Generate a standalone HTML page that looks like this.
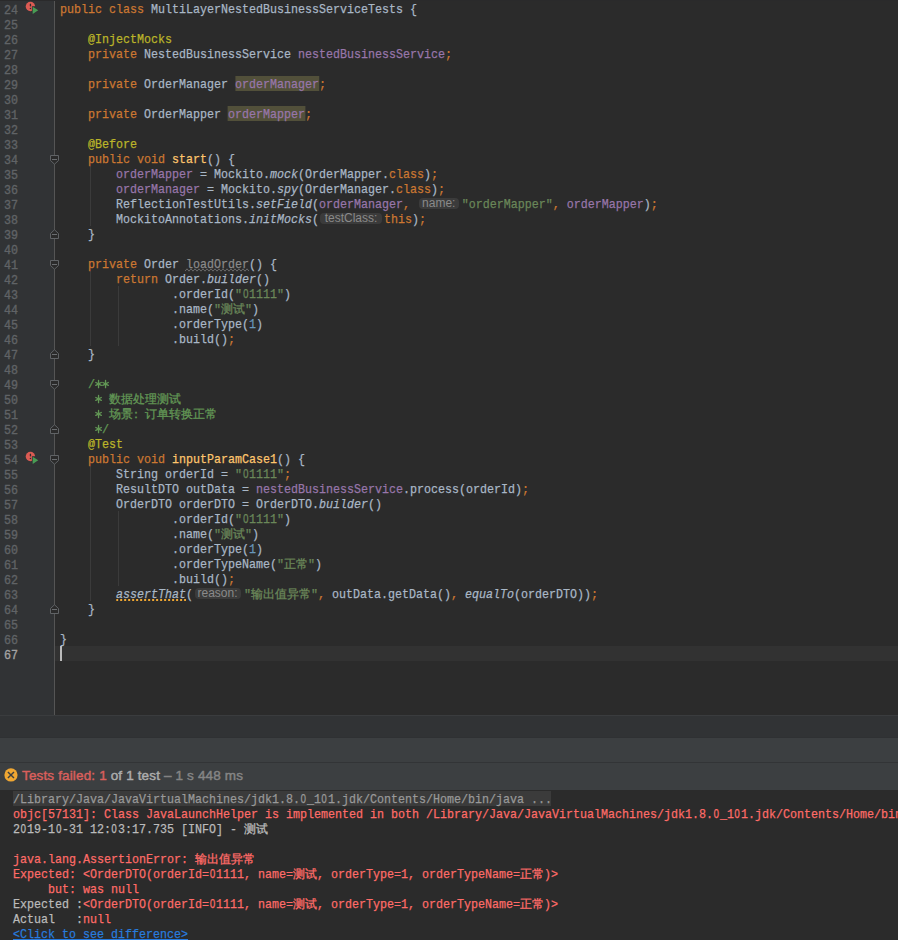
<!DOCTYPE html>
<html><head><meta charset="utf-8"><style>
*{margin:0;padding:0;box-sizing:border-box}
html,body{width:898px;height:940px;overflow:hidden;background:#2B2B2B}
body{position:relative;font-family:"Liberation Mono",monospace;font-size:13.5px;line-height:15px}
.gutter{position:absolute;left:0;top:0;width:54px;height:715px;background:#313335}
.sep{position:absolute;left:54px;top:0;width:1px;height:715px;background:#555555}
.curline{position:absolute;left:55px;top:646px;width:843px;height:15px;background:#323232}
.caret{position:absolute;left:60px;top:646px;width:2px;height:15px;background:#BBBBBB}
.l,.ln,.cl{position:absolute;height:15px;white-space:pre;transform:scaleX(0.86407);transform-origin:0 0;-webkit-text-stroke-width:0.25px}
.l{left:60px;color:#A9B7C6}
.ln{left:4px;color:#606366;font-size:12.6px;transform:scaleX(0.92579);-webkit-text-stroke-width:0.35px;padding-top:2px;height:17px}
.ln.cur{color:#A4A3A3}
.k{color:#CC7832}
.an{color:#BBB529}
.f{color:#9876AA}
.wf{color:#9876AA;background:#52503A;display:inline-block;height:15px;vertical-align:top;margin-top:-1px;padding-top:1px}
.s{color:#6A8759}
.n{color:#6897BB}
.c{color:#629755}
.m{color:#FFC66D}
.i{font-style:italic}
.iw{font-style:italic;background-image:linear-gradient(90deg,#F0A732 50%,transparent 50%);background-size:4.629px 2px;background-repeat:repeat-x;background-position:0 12px}
.u{color:#8A8A8A}
.cj{display:inline-block;white-space:nowrap;vertical-align:baseline;font-size:12px;transform:scaleX(1.15732);transform-origin:0 0;-webkit-text-stroke-width:0.3px}
.ast{position:absolute}
.z{display:inline-block;transform:scaleX(0.8)}
.sp{display:inline-block;height:1px}
.hint{position:absolute;height:11px;border-radius:4px;background:#3B3B3B;color:#8A8A8A;font-family:"Liberation Sans",sans-serif;font-size:12px;line-height:11px;text-align:center;white-space:pre}
.gi{position:absolute}
.fold{position:absolute}
.ig{position:absolute;width:1px;background:#3B3B3B}
.band1{position:absolute;left:0;top:715px;width:898px;height:23px;background:#313335;border-top:1px solid #3A3C3E}
.band2{position:absolute;left:0;top:737px;width:898px;height:25px;background:#3C3F41;border-top:1px solid #2F3133}
.band3{position:absolute;left:0;top:762px;width:898px;height:28px;background:#3C3F41;border-top:1px solid #323436}
.status{position:absolute;left:22px;top:763px;height:28px;line-height:26px;font-family:"Liberation Sans",sans-serif;font-size:13.5px;white-space:pre;letter-spacing:0.15px;-webkit-text-stroke-width:0.45px}
.status .r{color:#D95F5C}.status .g1{color:#ADADAD}.status .g2{color:#858585}
.console{position:absolute;left:0;top:790px;width:898px;height:150px;background:#2B2B2B}
.cl{left:13px;color:#BBBBBB}
.cmdbg{position:absolute;left:13px;height:15px;background:#3B3B3B}
.cl.cmd{color:#999999}
.err,.cl .err{color:#FF6B68}
.out{color:#BBBBBB}
.link{color:#287BDE;text-decoration:underline}
</style></head><body>
<div class="gutter"></div>
<div class="curline"></div>
<div class="sep"></div>
<div class="ln" style="top:2px">24</div>
<div class="ln" style="top:17px">25</div>
<div class="ln" style="top:32px">26</div>
<div class="ln" style="top:47px">27</div>
<div class="ln" style="top:62px">28</div>
<div class="ln" style="top:77px">29</div>
<div class="ln" style="top:92px">30</div>
<div class="ln" style="top:107px">31</div>
<div class="ln" style="top:122px">32</div>
<div class="ln" style="top:137px">33</div>
<div class="ln" style="top:152px">34</div>
<div class="ln" style="top:167px">35</div>
<div class="ln" style="top:182px">36</div>
<div class="ln" style="top:197px">37</div>
<div class="ln" style="top:212px">38</div>
<div class="ln" style="top:227px">39</div>
<div class="ln" style="top:242px">40</div>
<div class="ln" style="top:257px">41</div>
<div class="ln" style="top:272px">42</div>
<div class="ln" style="top:287px">43</div>
<div class="ln" style="top:302px">44</div>
<div class="ln" style="top:317px">45</div>
<div class="ln" style="top:332px">46</div>
<div class="ln" style="top:347px">47</div>
<div class="ln" style="top:362px">48</div>
<div class="ln" style="top:377px">49</div>
<div class="ln" style="top:392px">50</div>
<div class="ln" style="top:407px">51</div>
<div class="ln" style="top:422px">52</div>
<div class="ln" style="top:437px">53</div>
<div class="ln" style="top:452px">54</div>
<div class="ln" style="top:467px">55</div>
<div class="ln" style="top:482px">56</div>
<div class="ln" style="top:497px">57</div>
<div class="ln" style="top:512px">58</div>
<div class="ln" style="top:527px">59</div>
<div class="ln" style="top:542px">60</div>
<div class="ln" style="top:557px">61</div>
<div class="ln" style="top:572px">62</div>
<div class="ln" style="top:587px">63</div>
<div class="ln" style="top:602px">64</div>
<div class="ln" style="top:617px">65</div>
<div class="ln" style="top:632px">66</div>
<div class="ln cur" style="top:647px">67</div>
<div class="ig" style="left:118px;top:286px;height:60px"></div>
<div class="ig" style="left:118px;top:511px;height:75px"></div>
<div class="ig" style="left:90px;top:166px;height:60px"></div>
<div class="ig" style="left:90px;top:271px;height:75px"></div>
<div class="ig" style="left:90px;top:466px;height:135px"></div>
<svg class="fold" style="left:50px;top:150px" width="9" height="15" viewBox="0 0 9 15"><path d="M0.5 5.5 H8.5 V10.5 L4.5 14.2 L0.5 10.5 Z" fill="#2B2B2B" stroke="#606366" stroke-width="1"/><rect x="2" y="9" width="5" height="1" fill="#6A6D70"/></svg>
<svg class="fold" style="left:50px;top:225px" width="9" height="15" viewBox="0 0 9 15"><path d="M0.5 13.5 H8.5 V8.5 L4.5 4.8 L0.5 8.5 Z" fill="#2B2B2B" stroke="#606366" stroke-width="1"/><rect x="2" y="9" width="5" height="1" fill="#6A6D70"/></svg>
<svg class="fold" style="left:50px;top:255px" width="9" height="15" viewBox="0 0 9 15"><path d="M0.5 5.5 H8.5 V10.5 L4.5 14.2 L0.5 10.5 Z" fill="#2B2B2B" stroke="#606366" stroke-width="1"/><rect x="2" y="9" width="5" height="1" fill="#6A6D70"/></svg>
<svg class="fold" style="left:50px;top:345px" width="9" height="15" viewBox="0 0 9 15"><path d="M0.5 13.5 H8.5 V8.5 L4.5 4.8 L0.5 8.5 Z" fill="#2B2B2B" stroke="#606366" stroke-width="1"/><rect x="2" y="9" width="5" height="1" fill="#6A6D70"/></svg>
<svg class="fold" style="left:50px;top:375px" width="9" height="15" viewBox="0 0 9 15"><path d="M0.5 5.5 H8.5 V10.5 L4.5 14.2 L0.5 10.5 Z" fill="#2B2B2B" stroke="#606366" stroke-width="1"/><rect x="2" y="9" width="5" height="1" fill="#6A6D70"/></svg>
<svg class="fold" style="left:50px;top:420px" width="9" height="15" viewBox="0 0 9 15"><path d="M0.5 13.5 H8.5 V8.5 L4.5 4.8 L0.5 8.5 Z" fill="#2B2B2B" stroke="#606366" stroke-width="1"/><rect x="2" y="9" width="5" height="1" fill="#6A6D70"/></svg>
<svg class="fold" style="left:50px;top:450px" width="9" height="15" viewBox="0 0 9 15"><path d="M0.5 5.5 H8.5 V10.5 L4.5 14.2 L0.5 10.5 Z" fill="#2B2B2B" stroke="#606366" stroke-width="1"/><rect x="2" y="9" width="5" height="1" fill="#6A6D70"/></svg>
<svg class="fold" style="left:50px;top:600px" width="9" height="15" viewBox="0 0 9 15"><path d="M0.5 13.5 H8.5 V8.5 L4.5 4.8 L0.5 8.5 Z" fill="#2B2B2B" stroke="#606366" stroke-width="1"/><rect x="2" y="9" width="5" height="1" fill="#6A6D70"/></svg>
<svg class="gi" style="left:22px;top:1px" width="20" height="15" viewBox="0 0 20 15">
<circle cx="8.4" cy="5.5" r="4.7" fill="#DB5B53"/>
<ellipse cx="8.45" cy="3.9" rx="0.75" ry="1.5" fill="#2d2d2d"/>
<circle cx="8.45" cy="7.5" r="0.75" fill="#2d2d2d"/>
<rect x="9.9" y="5.2" width="8" height="9" fill="#313335"/>
<path d="M10.7 5.7 L16.2 9.3 L10.7 12.9 Z" fill="#499C54"/>
</svg><svg class="gi" style="left:22px;top:451px" width="20" height="15" viewBox="0 0 20 15">
<circle cx="8.4" cy="5.5" r="4.7" fill="#DB5B53"/>
<ellipse cx="8.45" cy="3.9" rx="0.75" ry="1.5" fill="#2d2d2d"/>
<circle cx="8.45" cy="7.5" r="0.75" fill="#2d2d2d"/>
<rect x="9.9" y="5.2" width="8" height="9" fill="#313335"/>
<path d="M10.7 5.7 L16.2 9.3 L10.7 12.9 Z" fill="#499C54"/>
</svg>
<div class="l" style="top:2px"><span class="k">public class</span> MultiLayerNestedBusinessServiceTests {</div>
<div class="l" style="top:17px"></div>
<div class="l" style="top:32px">    <span class="an">@InjectMocks</span></div>
<div class="l" style="top:47px">    <span class="k">private</span> NestedBusinessService <span class="f">nestedBusinessService</span><span class="k">;</span></div>
<div class="l" style="top:62px"></div>
<div class="l" style="top:77px">    <span class="k">private</span> OrderManager <span class="wf">orderManager</span><span class="k">;</span></div>
<div class="l" style="top:92px"></div>
<div class="l" style="top:107px">    <span class="k">private</span> OrderMapper <span class="wf">orderMapper</span><span class="k">;</span></div>
<div class="l" style="top:122px"></div>
<div class="l" style="top:137px">    <span class="an">@Before</span></div>
<div class="l" style="top:152px">    <span class="k">public void</span> <span class="m">start</span>() {</div>
<div class="l" style="top:167px">        <span class="f">orderMapper</span> = Mockito.<span class="i">mock</span>(OrderMapper.<span class="k">class</span>)<span class="k">;</span></div>
<div class="l" style="top:182px">        <span class="f">orderManager</span> = Mockito.<span class="i">spy</span>(OrderManager.<span class="k">class</span>)<span class="k">;</span></div>
<div class="l" style="top:197px">        ReflectionTestUtils.<span class="i">setField</span>(<span class="f">orderManager</span><span class="k">,</span> <span class="sp" style="width:51.616px"></span><span class="s">"orderMapper"</span><span class="k">,</span> <span class="f">orderMapper</span>)<span class="k">;</span></div>
<div class="l" style="top:212px">        MockitoAnnotations.<span class="i">initMocks</span>(<span class="sp" style="width:75.226px"></span><span class="k">this</span>)<span class="k">;</span></div>
<div class="l" style="top:227px">    }</div>
<div class="l" style="top:242px"></div>
<div class="l" style="top:257px">    <span class="k">private</span> Order <span class="u">loadOrder</span>() {</div>
<div class="l" style="top:272px">        <span class="k">return</span> Order.<span class="i">builder</span>()</div>
<div class="l" style="top:287px">                .orderId(<span class="s">"<span class="z">O</span>1111"</span>)</div>
<div class="l" style="top:302px">                .name(<span class="s">"<span class="cj" style="width:27.776px">测试</span>"</span>)</div>
<div class="l" style="top:317px">                .orderType(<span class="n">1</span>)</div>
<div class="l" style="top:332px">                .build()<span class="k">;</span></div>
<div class="l" style="top:347px">    }</div>
<div class="l" style="top:362px"></div>
<div class="l" style="top:377px">    <span class="c">/  </span></div>
<div class="l" style="top:392px">    <span class="c">   <span class="cj" style="width:83.327px">数据处理测试</span></span></div>
<div class="l" style="top:407px">    <span class="c">   <span class="cj" style="width:124.990px">场景<span style="position:relative;left:-3px">：</span>订单转换正常</span></span></div>
<div class="l" style="top:422px">    <span class="c">  /</span></div>
<div class="l" style="top:437px">    <span class="an">@Test</span></div>
<div class="l" style="top:452px">    <span class="k">public void</span> <span class="m">inputParamCase1</span>() {</div>
<div class="l" style="top:467px">        String orderId = <span class="s">"<span class="z">O</span>1111"</span><span class="k">;</span></div>
<div class="l" style="top:482px">        ResultDTO outData = <span class="f">nestedBusinessService</span>.process(orderId)<span class="k">;</span></div>
<div class="l" style="top:497px">        OrderDTO orderDTO = OrderDTO.<span class="i">builder</span>()</div>
<div class="l" style="top:512px">                .orderId(<span class="s">"<span class="z">O</span>1111"</span>)</div>
<div class="l" style="top:527px">                .name(<span class="s">"<span class="cj" style="width:27.776px">测试</span>"</span>)</div>
<div class="l" style="top:542px">                .orderType(<span class="n">1</span>)</div>
<div class="l" style="top:557px">                .orderTypeName(<span class="s">"<span class="cj" style="width:27.776px">正常</span>"</span>)</div>
<div class="l" style="top:572px">                .build()<span class="k">;</span></div>
<div class="l" style="top:587px">        <span class="iw">assertThat</span>(<span class="sp" style="width:59.023px"></span><span class="s">"<span class="cj" style="width:69.439px">输出值异常</span>"</span><span class="k">,</span> outData.getData()<span class="k">,</span> <span class="i">equalTo</span>(orderDTO))<span class="k">;</span></div>
<div class="l" style="top:602px">    }</div>
<div class="l" style="top:617px"></div>
<div class="l" style="top:632px">}</div>
<div class="l" style="top:647px"></div>
<div class="hint" style="left:418.50px;top:198px;width:40.50px">name:</div>
<div class="hint" style="left:320.20px;top:213px;width:61.60px">testClass:</div>
<div class="hint" style="left:194.50px;top:588px;width:46.00px">reason:</div><svg class="ast" style="left:94.95px;top:379px" width="7" height="10" viewBox="0 0 7 10"><path d="M3.55 1.3 V8.7 M0.8 3.5 L6.3 6.4 M0.8 6.4 L6.3 3.5" stroke="#629755" stroke-width="1.3" stroke-linecap="round" fill="none"/></svg>
<svg class="ast" style="left:101.95px;top:379px" width="7" height="10" viewBox="0 0 7 10"><path d="M3.55 1.3 V8.7 M0.8 3.5 L6.3 6.4 M0.8 6.4 L6.3 3.5" stroke="#629755" stroke-width="1.3" stroke-linecap="round" fill="none"/></svg>
<svg class="ast" style="left:94.95px;top:394px" width="7" height="10" viewBox="0 0 7 10"><path d="M3.55 1.3 V8.7 M0.8 3.5 L6.3 6.4 M0.8 6.4 L6.3 3.5" stroke="#629755" stroke-width="1.3" stroke-linecap="round" fill="none"/></svg>
<svg class="ast" style="left:94.95px;top:409px" width="7" height="10" viewBox="0 0 7 10"><path d="M3.55 1.3 V8.7 M0.8 3.5 L6.3 6.4 M0.8 6.4 L6.3 3.5" stroke="#629755" stroke-width="1.3" stroke-linecap="round" fill="none"/></svg>
<svg class="ast" style="left:94.95px;top:424px" width="7" height="10" viewBox="0 0 7 10"><path d="M3.55 1.3 V8.7 M0.8 3.5 L6.3 6.4 M0.8 6.4 L6.3 3.5" stroke="#629755" stroke-width="1.3" stroke-linecap="round" fill="none"/></svg>
<div class="caret"></div>
<svg style="position:absolute;left:185px;top:268px" width="64" height="4" viewBox="0 0 64 4"><polyline points="0,3.2 2,0.8 4,3.2 6,0.8 8,3.2 10,0.8 12,3.2 14,0.8 16,3.2 18,0.8 20,3.2 22,0.8 24,3.2 26,0.8 28,3.2 30,0.8 32,3.2 34,0.8 36,3.2 38,0.8 40,3.2 42,0.8 44,3.2 46,0.8 48,3.2 50,0.8 52,3.2 54,0.8 56,3.2 58,0.8 60,3.2 62,0.8 64,3.2" fill="none" stroke="#707070" stroke-width="0.9"/></svg>
<div style="position:absolute;left:0;top:0;width:898px;height:1px;background:#2A2A2B"></div>
<div class="band1"></div>
<div class="band2"></div>
<div class="band3"></div>
<svg style="position:absolute;left:4px;top:768px" width="14" height="14" viewBox="0 0 14 14"><circle cx="6.96" cy="6.96" r="6.6" fill="#F0A732"/><path d="M3.9 3.9 L10.0 10.0 M10.0 3.9 L3.9 10.0" stroke="#3C3F41" stroke-width="1.4"/></svg>
<div class="status"><span class="r">Tests failed: 1</span><span class="g1"> of 1 test</span><span class="g2"> – 1 s 448 ms</span></div>
<div class="console"></div>
<div class="cmdbg" style="top:791px;width:538px"></div>
<div class="cl cmd" style="top:792px">/Library/Java/JavaVirtualMachines/jdk1.8.<span class="z">O</span>_1<span class="z">O</span>1.jdk/Contents/Home/bin/java ...</div>
<div class="cl err" style="top:807px">objc[57131]: Class JavaLaunchHelper is implemented in both /Library/Java/JavaVirtualMachines/jdk1.8.<span class="z">O</span>_1<span class="z">O</span>1.jdk/Contents/Home/bin/java</div>
<div class="cl out" style="top:822px">2<span class="z">O</span>19-1<span class="z">O</span>-31 12:<span class="z">O</span>3:17.735 [INFO] - <span class="cj" style="width:27.776px">测试</span></div>
<div class="cl out" style="top:837px"></div>
<div class="cl err" style="top:852px">java.lang.AssertionError: <span class="cj" style="width:69.439px">输出值异常</span></div>
<div class="cl err" style="top:867px">Expected: &lt;OrderDTO(orderId=<span class="z">O</span>1111, name=<span class="cj" style="width:27.776px">测试</span>, orderType=1, orderTypeName=<span class="cj" style="width:27.776px">正常</span>)&gt;</div>
<div class="cl err" style="top:882px">     but: was null</div>
<div class="cl" style="top:897px"><span class="out">Expected :</span><span class="err">&lt;OrderDTO(orderId=<span class="z">O</span>1111, name=<span class="cj" style="width:27.776px">测试</span>, orderType=1, orderTypeName=<span class="cj" style="width:27.776px">正常</span>)&gt;</span></div>
<div class="cl" style="top:912px"><span class="out">Actual   :</span><span class="err">null</span></div>
<div class="cl link" style="top:927px">&lt;Click to see difference&gt;</div>
</body></html>
